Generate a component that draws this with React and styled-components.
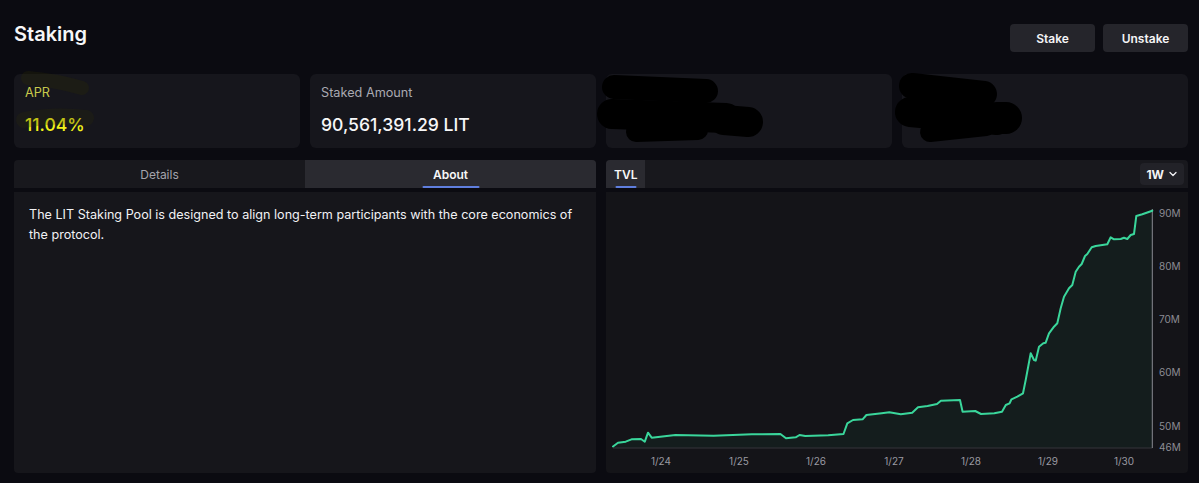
import React from "react";
import styled, { createGlobalStyle } from "styled-components";
import { ChevronDown } from "lucide-react";

const GlobalStyle = createGlobalStyle`
  html, body { margin: 0; padding: 0; background: #0b0b11; }
  body { font-family: Inter, "Noto Sans", sans-serif; color: #f4f4f6; -webkit-font-smoothing: antialiased; }
`;

const Page = styled.div`
  padding: 20px 11px 10px 14px;
  display: flex;
  flex-direction: column;
`;

const Header = styled.div`
  display: flex;
  justify-content: space-between;
  align-items: flex-start;
  height: 32px;
`;

const Title = styled.h1`
  margin: 0;
  font-size: 20px;
  line-height: 28px;
  font-weight: 600;
  color: #f7f7f8;
`;

const Actions = styled.div`
  display: flex;
  gap: 8px;
  margin-top: 4px;
`;

const Button = styled.button`
  width: 85px;
  height: 28px;
  border: none;
  border-radius: 4px;
  background: #25252b;
  color: #f4f4f6;
  font-family: inherit;
  font-size: 12px;
  font-weight: 600;
  cursor: pointer;
`;

const Cards = styled.div`
  margin-top: 22px;
  display: grid;
  grid-template-columns: repeat(4, 1fr);
  gap: 10px;
`;

const Card = styled.div`
  position: relative;
  height: 74px;
  box-sizing: border-box;
  padding: 9px 11px;
  background: #16161c;
  border-radius: 6px;
  display: flex;
  flex-direction: column;
  gap: 10px;
`;

const Label = styled.div`
  font-size: 12.7px;
  line-height: 20px;
  color: ${(p) => (p.$accent ? "#c9c94a" : "#a9a9b1")};
`;

const Value = styled.div`
  font-size: 17.6px;
  line-height: 24px;
  font-weight: 500;
  color: ${(p) => (p.$accent ? "#f2f21a" : "#f7f7f8")};
`;

const Scribble = styled.svg`
  position: absolute;
  pointer-events: none;
  left: ${(p) => p.$left}px;
  top: ${(p) => p.$top}px;
  overflow: visible;
`;

const Panels = styled.div`
  margin-top: 12px;
  display: grid;
  grid-template-columns: 1fr 1fr;
  gap: 10px;
`;

const Column = styled.div`
  display: flex;
  flex-direction: column;
  gap: 4px;
`;

const TabBar = styled.div`
  display: flex;
  align-items: stretch;
  justify-content: space-between;
  height: 28px;
  background: #18181d;
  border-radius: 4px 4px 0 0;
  overflow: hidden;
`;

const Tab = styled.div`
  position: relative;
  flex: ${(p) => (p.$grow ? 1 : "none")};
  padding: 0 ${(p) => (p.$grow ? 0 : 8)}px;
  display: flex;
  align-items: center;
  justify-content: center;
  font-size: 12px;
  font-weight: ${(p) => (p.$active ? 600 : 400)};
  color: ${(p) => (p.$active ? "#f7f7f8" : "#a4a4ac")};
  background: ${(p) => (p.$active ? "#2a2a30" : "transparent")};
  &::after {
    content: "";
    display: ${(p) => (p.$active ? "block" : "none")};
    position: absolute;
    bottom: 0;
    left: 50%;
    transform: translateX(-50%);
    width: ${(p) => p.$line}px;
    height: 2px;
    background: #5f7ede;
    border-radius: 1px;
  }
`;

const RangeButton = styled.div`
  align-self: center;
  margin-right: 4px;
  height: 22px;
  padding: 0 5px 0 6px;
  display: flex;
  align-items: center;
  gap: 3px;
  border-radius: 4px;
  background: #222228;
  font-size: 12px;
  font-weight: 700;
  color: #f4f4f6;
`;

const Body = styled.div`
  height: 281px;
  box-sizing: border-box;
  padding: 13px 15px;
  background: #16161b;
  border-radius: 0 0 4px 4px;
  font-size: 12.6px;
  line-height: 20px;
  color: #f1f1f4;
`;

const ChartBox = styled.div`
  height: 281px;
  background: #141418;
  border-radius: 0 0 4px 4px;
  overflow: hidden;
`;

const OX = 607;
const OY = 192;
const raw = [
  [614, 446.5], [619, 442.7], [626.7, 441.7], [632.5, 439.3], [642, 439], [645.8, 441.7], [649, 432.7],
  [652.7, 437.7], [676.4, 435], [714.6, 435.7], [752.8, 434.3], [781.4, 434], [787, 438.3], [796.7, 437.3],
  [800.5, 435], [806.3, 436], [829.2, 435.3], [844.5, 434], [848.3, 423.3], [854, 420], [863.6, 419.3],
  [867.4, 415], [882.7, 413.3], [890.3, 412.3], [901.8, 414.3], [913.2, 412.7], [919, 407.3], [928.5, 406],
  [938, 404], [941.9, 400.7], [961, 400], [963.6, 411.7], [976.2, 411], [982, 414], [995.3, 413.3],
  [1003, 411.7], [1006.8, 405], [1010.6, 403.3], [1012.5, 399.3], [1018.3, 396.7], [1024, 393.3],
  [1026.7, 380], [1031.7, 353.3], [1035, 360], [1036.7, 360.7], [1040, 346.7], [1044.3, 343.3],
  [1046.7, 342.7], [1050, 333.3], [1055, 326.7], [1058.3, 323.3], [1061.7, 308.3], [1065, 296.7],
  [1070, 288.3], [1073.3, 285], [1076.7, 271.7], [1080, 266.7], [1082.7, 264], [1086, 256], [1088.3, 254],
  [1092.7, 247.3], [1096.7, 246], [1108.3, 244.3], [1111.7, 237.3], [1115, 239.3], [1121.7, 239],
  [1125, 237.7], [1128.3, 239], [1131.7, 235], [1135, 234], [1137.3, 216], [1143.3, 214.3], [1153.3, 210.7],
];
const pts = raw.map(([x, y]) => [x - OX, y - OY]);
const lineD = pts.map(([x, y], i) => `${i ? "L" : "M"}${x.toFixed(1)} ${y.toFixed(1)}`).join(" ");
const baseY = 256;
const areaD = `${lineD} L${pts[pts.length - 1][0]} ${baseY} L${pts[0][0]} ${baseY} Z`;
const yLabels = [["90M", 21.3], ["80M", 74], ["70M", 127.5], ["60M", 180.7], ["50M", 234], ["46M", 255.5]];
const xLabels = [["1/24", 55], ["1/25", 133], ["1/26", 210], ["1/27", 288], ["1/28", 365], ["1/29", 442], ["1/30", 518]];

function Chart() {
  return (
    <svg width="581" height="281" viewBox="0 0 581 281">
      <path d={areaD} fill="#27d38f" fillOpacity="0.05" />
      <line x1="7" y1={baseY} x2="546.3" y2={baseY} stroke="#34343a" strokeWidth="1" />
      <line x1="546.3" y1="17" x2="546.3" y2={baseY} stroke="#8a8a92" strokeWidth="1" />
      <path d={lineD} fill="none" stroke="#3ad69b" strokeWidth="2" strokeLinejoin="round" strokeLinecap="round" />
      {yLabels.map(([t, y]) => (
        <text key={t} x="553" y={y} dy="3.5" fontSize="10" fill="#8c8c94" fontFamily="Inter, sans-serif">{t}</text>
      ))}
      {xLabels.map(([t, x]) => (
        <text key={t} x={x} y="269" dy="3.5" fontSize="10" fill="#9a9aa2" textAnchor="middle" fontFamily="Inter, sans-serif">{t}</text>
      ))}
    </svg>
  );
}

function Blot({ strokes }) {
  return (
    <Scribble $left={0} $top={0} width="1" height="1">
      {strokes.map(([x1, y1, x2, y2, w], i) => (
        <line key={i} x1={x1} y1={y1} x2={x2} y2={y2} stroke="#000" strokeWidth={w} strokeLinecap="round" />
      ))}
    </Scribble>
  );
}

export default function App() {
  return (
    <>
      <GlobalStyle />
      <Page>
        <Header>
          <Title>Staking</Title>
          <Actions>
            <Button>Stake</Button>
            <Button>Unstake</Button>
          </Actions>
        </Header>

        <Cards>
          <Card>
            <Scribble $left={0} $top={0} width="1" height="1">
              <path d="M14 4 Q40 6 68 14" stroke="#2a2a08" strokeOpacity="0.3" strokeWidth="14" fill="none" strokeLinecap="round" />
              <path d="M10 46 Q40 40 72 44" stroke="#2a2a08" strokeOpacity="0.25" strokeWidth="16" fill="none" strokeLinecap="round" />
            </Scribble>
            <Label $accent>APR</Label>
            <Value $accent>11.04%</Value>
          </Card>
          <Card>
            <Label>Staked Amount</Label>
            <Value>90,561,391.29 LIT</Value>
          </Card>
          <Card>
            <Blot
              strokes={[
                [8, 13, 100, 17, 24],
                [6, 40, 120, 44, 30],
                [118, 46, 142, 48, 30],
                [30, 58, 92, 56, 20],
              ]}
            />
          </Card>
          <Card>
            <Blot
              strokes={[
                [10, 12, 82, 20, 26],
                [8, 38, 95, 46, 30],
                [95, 44, 104, 44, 32],
                [28, 58, 84, 52, 20],
              ]}
            />
          </Card>
        </Cards>

        <Panels>
          <Column>
            <TabBar>
              <Tab $grow>Details</Tab>
              <Tab $grow $active $line={57}>About</Tab>
            </TabBar>
            <Body>
              The LIT Staking Pool is designed to align long-term participants with the core economics of the protocol.
            </Body>
          </Column>
          <Column>
            <TabBar>
              <Tab $active $line={21}>TVL</Tab>
              <RangeButton>
                1W <ChevronDown size={12} strokeWidth={2.5} />
              </RangeButton>
            </TabBar>
            <ChartBox>
              <Chart />
            </ChartBox>
          </Column>
        </Panels>
      </Page>
    </>
  );
}
